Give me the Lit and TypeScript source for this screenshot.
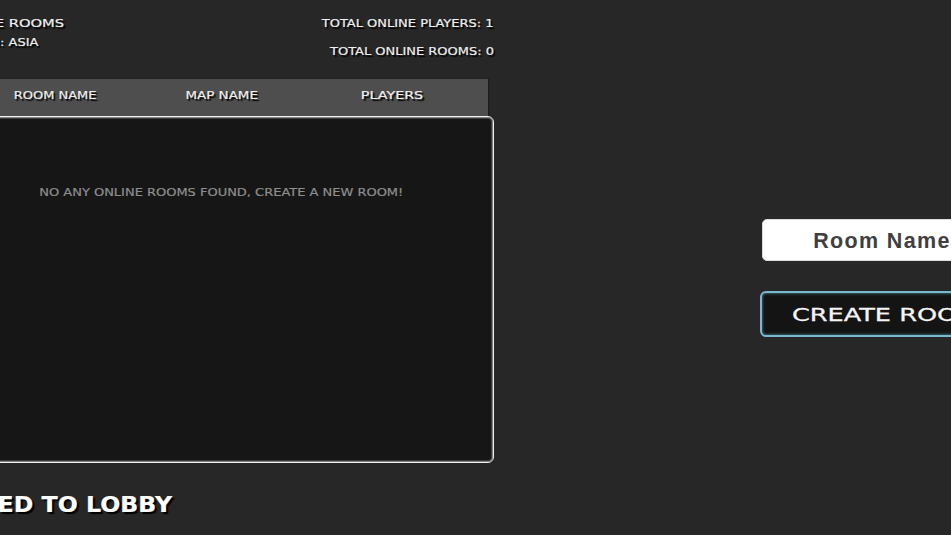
import { LitElement, html, css } from "lit";
import { customElement } from "lit/decorators.js";

@customElement("app-root")
export class AppRoot extends LitElement {
  static styles = css`
    :host { display: block; }
    .page {
      width: 951px; height: 535px; overflow: hidden; background: #272727;
      display: flex; font-family: "DejaVu Sans", sans-serif; color: #efefef;
    }
    .wide { display: inline-block; white-space: nowrap; transform: scaleX(1.18); -webkit-text-stroke: 0.2px currentColor; }
    .from-left { transform-origin: left center; }
    .from-right { transform-origin: right center; }
    .from-center { transform-origin: center center; }
    .left {
      flex: none; width: 546px; margin-left: -52px; display: flex; flex-direction: column;
    }
    .info {
      height: 79px; box-sizing: border-box; padding: 15px 0 0 1px; display: flex;
      justify-content: space-between; font-size: 11px; line-height: 18px;
      text-shadow: 1.5px 2px 1px #000;
    }
    .info-left { display: flex; flex-direction: column; gap: 1px; align-items: flex-start; }
    .rooms { margin-left: -24px; transform: scaleX(1.34); }
    .info-right { display: flex; flex-direction: column; gap: 10px; align-items: flex-end; }
    .head {
      height: 37px; box-sizing: border-box; padding: 0 0 4px 24px; margin-right: 6px; display: grid;
      grid-template-columns: 166px 168px 172px; align-items: center; justify-items: center;
      background: #4e4e4e; box-shadow: 1px 0 1px #1b1b1b;
      font-size: 11px; text-shadow: 1.5px 2px 1px #000;
    }
    .map { transform: scaleX(1.22); }
    .players { transform: scaleX(1.3); }
    .list {
      height: 347px; box-sizing: border-box; border: 1px solid #f0f0f0; border-radius: 6px;
      background: #161616; box-shadow: inset 0 0 0 1px #808080, inset 0 0 0 2px #3c3c3c;
      padding-top: 67px; text-align: center; font-size: 11px; line-height: 18px; color: #8e8e8e;
    }
    .status {
      margin-top: 29px; margin-left: -77px; font-size: 21px; font-weight: 700; line-height: 26px;
      white-space: nowrap; color: #fff; text-shadow: 2px 2px 1px #000;
    }
    .status .wide { transform: scaleX(1.125); }
    .right {
      flex: none; margin-left: 266px; padding-top: 219px; display: flex; flex-direction: column;
      gap: 30px; width: 244px;
    }
    .name {
      flex: none; height: 42px; margin: 0 2px; padding-top: 2px; box-sizing: border-box; border-radius: 5px; background: #fff;
      border: 1px solid #dcdcdc; display: flex; align-items: center; justify-content: center;
      font-family: "Liberation Sans", sans-serif; font-weight: 700; font-size: 21.5px; letter-spacing: 1.35px; color: #404040;
    }
    .create {
      flex: none; height: 46px; box-sizing: border-box; border: 2px solid #78b8ce; border-radius: 6px;
      background: #141414; box-shadow: inset 0 0 3px #5f9fb6; display: flex; align-items: center;
      padding-left: 30px; font-size: 18px; white-space: nowrap; color: #f4f4f4;
    }
    .create span { display: inline-block; transform: scaleX(1.42); transform-origin: left center; -webkit-text-stroke: 0.3px currentColor; }
  `;

  render() {
    return html`
      <div class="page">
        <div class="left">
          <div class="info">
            <div class="info-left">
              <span class="wide from-left rooms">AVAILABLE ROOMS</span>
              <span class="wide from-left">REGION: ASIA</span>
            </div>
            <div class="info-right">
              <span class="wide from-right">TOTAL ONLINE PLAYERS: 1</span>
              <span class="wide from-right">TOTAL ONLINE ROOMS: 0</span>
            </div>
          </div>
          <div class="head">
            <span class="wide from-center">ROOM NAME</span>
            <span class="wide from-center map">MAP NAME</span>
            <span class="wide from-center players">PLAYERS</span>
          </div>
          <div class="list"><span class="wide from-center">NO ANY ONLINE ROOMS FOUND, CREATE A NEW ROOM!</span></div>
          <div class="status"><span class="wide from-left">CONNECTED TO LOBBY</span></div>
        </div>
        <div class="right">
          <div class="name">Room Name</div>
          <div class="create"><span>CREATE ROOM</span></div>
        </div>
      </div>
    `;
  }
}
